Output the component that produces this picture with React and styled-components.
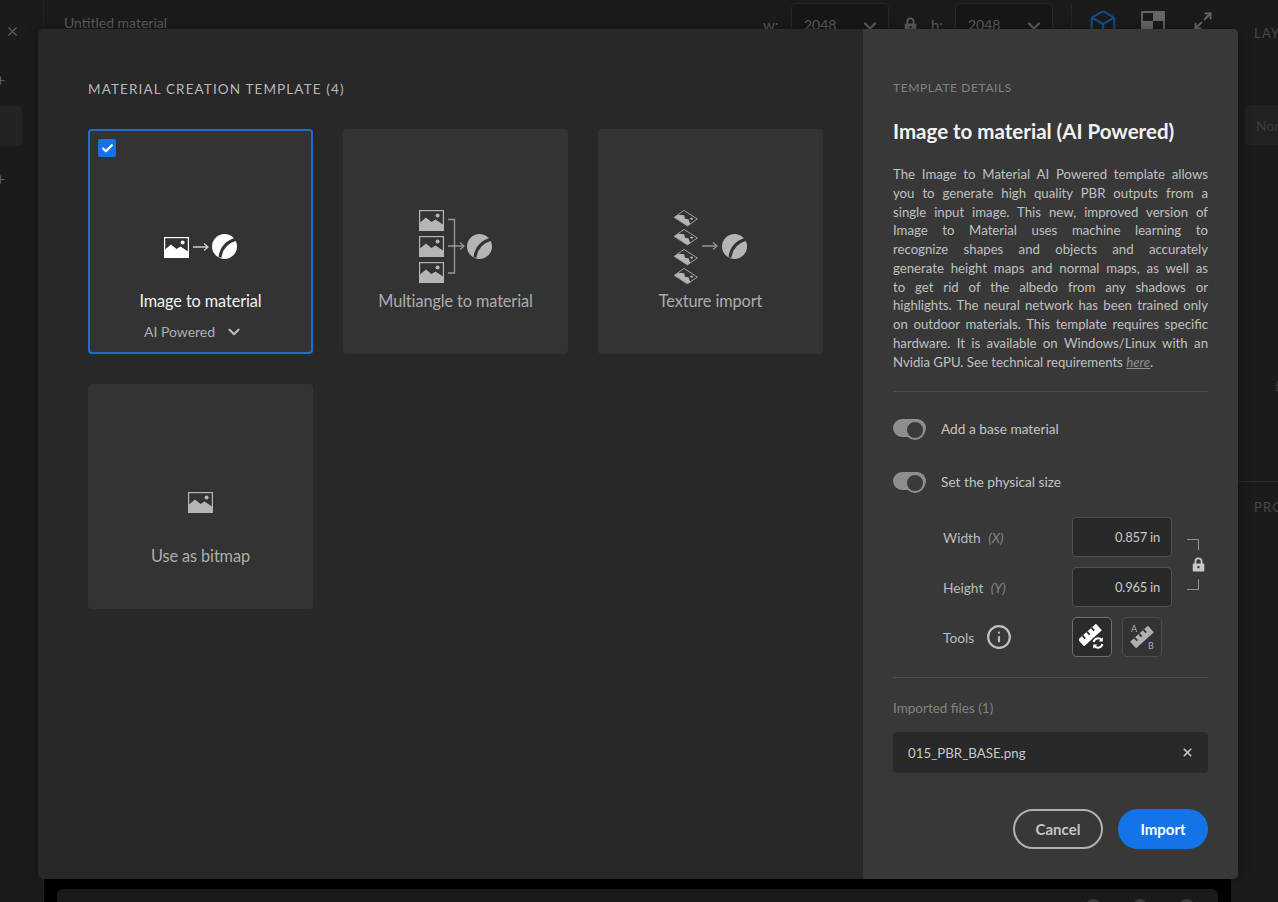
import styled, { createGlobalStyle } from 'styled-components';
import { X, Plus, ChevronDown, Check, Info, Box, Maximize2 } from 'lucide-react';

const GlobalStyle = createGlobalStyle`
  html, body {
    margin: 0;
    padding: 0;
    background: #1b1b1b;
    overflow: hidden;
  }
  * { box-sizing: border-box; }
  body {
    font-family: "Lato", "Noto Sans", sans-serif;
  }
`;

// Small drawings used on the template cards
const ImageGlyph = ({ x = 0, y = 0 }) => (
  <g transform={`translate(${x} ${y})`}>
    <rect x="0.6" y="0.6" width="23.8" height="19.8" fill="none" stroke="currentColor" strokeWidth="1.2" />
    <path d="M1 20V12.5L7 7.5L12.5 12L16.5 9.5L24 14.5V20Z" fill="currentColor" />
    <circle cx="18.6" cy="5.6" r="2" fill="currentColor" />
  </g>
);

const SphereGlyph = ({ x = 0, y = 0, bg }) => (
  <g transform={`translate(${x} ${y})`}>
    <circle cx="12.5" cy="12.5" r="12.5" fill="currentColor" />
    <path d="M8 23.5C9 15 14 8 24.5 5" fill="none" stroke={bg} strokeWidth="3" />
  </g>
);

const Arrow = ({ x, y, w = 15 }) => (
  <path
    d={`M${x} ${y}H${x + w}M${x + w - 4} ${y - 3.5}L${x + w} ${y}L${x + w - 4} ${y + 3.5}`}
    fill="none"
    stroke="currentColor"
    strokeWidth="1.3"
    opacity="0.75"
  />
);

const ImageToMaterialIcon = () => (
  <svg width="74" height="26" viewBox="0 0 74 26">
    <ImageGlyph x={0} y={3} />
    <Arrow x={29} y={13} />
    <SphereGlyph x={48} y={0} bg="#333" />
  </svg>
);

const MultiangleIcon = () => (
  <svg width="74" height="74" viewBox="0 0 74 74">
    <ImageGlyph x={0} y={0} />
    <ImageGlyph x={0} y={26} />
    <ImageGlyph x={0} y={52} />
    <path d="M29 9.5H35.5V63H29" fill="none" stroke="currentColor" strokeWidth="1.4" opacity="0.75" />
    <Arrow x={29} y={36} w={16} />
    <SphereGlyph x={48} y={24} bg="#333" />
  </svg>
);

const TiltedImage = ({ y }) => (
  <g transform={`matrix(0.56 0.36 -0.5 0.35 10 ${y})`}>
    <ImageGlyph />
  </g>
);

const TextureIcon = () => (
  <svg width="74" height="74" viewBox="0 0 74 74">
    <TiltedImage y={0} />
    <TiltedImage y={19} />
    <TiltedImage y={39} />
    <TiltedImage y={58} />
    <Arrow x={28} y={36} w={15} />
    <SphereGlyph x={48} y={24} bg="#333" />
  </svg>
);

const BitmapIcon = () => (
  <svg width="25" height="21" viewBox="0 0 25 21">
    <ImageGlyph />
  </svg>
);

const RulerBody = ({ x, y, bg }) => (
  <g transform={`translate(${x} ${y}) rotate(-42)`}>
    <rect x="-12" y="-4.5" width="24" height="9" rx="0.8" fill="currentColor" />
    <path d="M-6 -4.5V-0.5M0 -4.5V-0.5M6 -4.5V-0.5" stroke={bg} strokeWidth="1.8" />
  </g>
);

const RulerSyncIcon = () => (
  <svg width="26" height="26" viewBox="0 0 26 26">
    <RulerBody x={11} y={11} bg="#2b2b2b" />
    <circle cx="19" cy="19" r="7" fill="#2b2b2b" />
    <path
      d="M14.6 18A4.6 4.6 0 0 1 22.6 16M23.4 20A4.6 4.6 0 0 1 15.4 22"
      fill="none"
      stroke="currentColor"
      strokeWidth="2"
    />
    <path d="M23.8 13.2V17.4H19.6ZM14.2 24.8V20.6H18.4Z" fill="currentColor" />
  </svg>
);

const RulerLabelIcon = () => (
  <svg width="30" height="30" viewBox="0 0 30 30">
    <RulerBody x={15} y={15} bg="#333" />
    <Tag x="4" y="10">A</Tag>
    <Tag x="21" y="27">B</Tag>
  </svg>
);

const PadLock = ({ size, color }) => (
  <svg width={size} height={size * 1.15} viewBox="0 0 13 15">
    <path d="M3.4 7V4.4A3.1 3.1 0 0 1 9.6 4.4V7" fill="none" stroke={color} strokeWidth="1.8" />
    <path
      fillRule="evenodd"
      d="M1.5 6.5H11.5A.8 .8 0 0 1 12.3 7.3V13.7A.8 .8 0 0 1 11.5 14.5H1.5A.8 .8 0 0 1 .7 13.7V7.3A.8 .8 0 0 1 1.5 6.5ZM6.5 9A1.2 1.2 0 1 0 6.5 11.4A1.2 1.2 0 1 0 6.5 9Z"
      fill={color}
    />
  </svg>
);

const CheckerIcon = () => (
  <svg width="24" height="20" viewBox="0 0 24 20">
    <path d="M1 1H23V19H1Z" fill="none" stroke="#666" strokeWidth="1.8" />
    <path d="M12 1H23V10H12ZM1 10H12V19H1Z" fill="#666" />
  </svg>
);

const TEMPLATES = [
  { name: 'Image to material', Icon: ImageToMaterialIcon, selected: true, sub: 'AI Powered' },
  { name: 'Multiangle to material', Icon: MultiangleIcon },
  { name: 'Texture import', Icon: TextureIcon },
  { name: 'Use as bitmap', Icon: BitmapIcon },
];

// Wrapped by hand so every line breaks where it does in the app
const DESCRIPTION_LINES = [
  'The Image to Material AI Powered template allows',
  'you to generate high quality PBR outputs from a',
  'single input image. This new, improved version of',
  'Image to Material uses machine learning to',
  'recognize shapes and objects and accurately',
  'generate height maps and normal maps, as well as',
  'to get rid of the albedo from any shadows or',
  'highlights. The neural network has been trained only',
  'on outdoor materials. This template requires specific',
  'hardware. It is available on Windows/Linux with an',
];

export default function App() {
  return (
    <Shell>
      <GlobalStyle />
      <LeftRail>
        <RailClose><X size={15} /></RailClose>
        <RailPlus><Plus size={13} /></RailPlus>
        <RailBox />
        <RailPlus $second><Plus size={13} /></RailPlus>
      </LeftRail>

      <Main>
        <TopBar>
          <DocTitle>Untitled material</DocTitle>
          <SizeLabel>w:</SizeLabel>
          <SizeSelect>2048 <ChevronDown size={20} strokeWidth={2.8} /></SizeSelect>
          <BarLock><PadLock size={13} color="#5c5c5c" /></BarLock>
          <SizeLabel $narrow>h:</SizeLabel>
          <SizeSelect>2048 <ChevronDown size={20} strokeWidth={2.8} /></SizeSelect>
          <BarDivider />
          <ViewIcon $active><Box size={30} strokeWidth={1.7} /></ViewIcon>
          <ViewIcon><CheckerIcon /></ViewIcon>
          <ViewIcon><Maximize2 size={20} strokeWidth={2.4} /></ViewIcon>
        </TopBar>
        <Canvas />
        <BottomPanel>
          <BottomDot />
          <BottomDot />
          <BottomDot />
        </BottomPanel>
      </Main>

      <RightRail>
        <RailHeading>LAYERS</RailHeading>
        <RailField>None</RailField>
        <RailGlyph>L</RailGlyph>
        <RailDivider />
        <RailHeading>PROPERTIES</RailHeading>
      </RightRail>

      <Modal>
        <TemplatesPane>
          <PaneHeading>MATERIAL CREATION TEMPLATE (4)</PaneHeading>
          <CardGrid>
            {TEMPLATES.map(({ name, Icon, selected, sub }) => (
              <Card key={name} $selected={selected}>
                {selected && <CardCheck><Check size={13} strokeWidth={4} /></CardCheck>}
                <CardIcon><Icon /></CardIcon>
                <CardName $selected={selected}>{name}</CardName>
                {sub && (
                  <CardSub>
                    {sub}
                    <ChevronDown size={18} strokeWidth={3} />
                  </CardSub>
                )}
              </Card>
            ))}
          </CardGrid>
        </TemplatesPane>

        <DetailsPane>
          <DetailsLabel>TEMPLATE DETAILS</DetailsLabel>
          <DetailsTitle>Image to material (AI Powered)</DetailsTitle>
          <Description>
            {DESCRIPTION_LINES.map(line => (
              <DescriptionLine key={line}>{line}</DescriptionLine>
            ))}
            <DescriptionLine $last>
              Nvidia GPU. See technical requirements <HereLink>here</HereLink>.
            </DescriptionLine>
          </Description>
          <Rule />
          <ToggleRow>
            <Toggle />
            <span>Add a base material</span>
          </ToggleRow>
          <ToggleRow $second>
            <Toggle />
            <span>Set the physical size</span>
          </ToggleRow>

          <SizeGrid>
            <SizeName>Width <em>(X)</em></SizeName>
            <ValueBox>0.857 in</ValueBox>
            <LinkBracket>
              <BracketTop />
              <BracketLock><PadLock size={13} color="#c8c8c8" /></BracketLock>
              <BracketBottom />
            </LinkBracket>
            <SizeName>Height <em>(Y)</em></SizeName>
            <ValueBox>0.965 in</ValueBox>
            <SizeName>
              Tools
              <InfoMark><Info size={26} strokeWidth={2} /></InfoMark>
            </SizeName>
            <ToolRow>
              <ToolButton $active><RulerSyncIcon /></ToolButton>
              <ToolButton><RulerLabelIcon /></ToolButton>
            </ToolRow>
          </SizeGrid>
          <Rule $lower />

          <ImportedLabel>Imported files (1)</ImportedLabel>
          <FileChip>
            015_PBR_BASE.png
            <X size={13} strokeWidth={3} />
          </FileChip>

          <Actions>
            <CancelButton>Cancel</CancelButton>
            <ImportButton>Import</ImportButton>
          </Actions>
        </DetailsPane>
      </Modal>
    </Shell>
  );
}

// Page behind the dialog
const Shell = styled.div`
  position: relative;
  display: flex;
  width: 1278px;
  height: 902px;
  overflow: hidden;
  background: #1b1b1b;
`;

const LeftRail = styled.aside`
  width: 44px;
  flex: none;
  display: flex;
  flex-direction: column;
  align-items: flex-start;
  background: #1b1b1b;
  border-right: 1px solid #222;
`;

const RailClose = styled.div`
  display: flex;
  color: #5a5a5a;
  padding: 24px 0 0 5px;
`;

const RailPlus = styled.div`
  display: flex;
  color: #5a5a5a;
  margin: ${p => (p.$second ? '27px' : '35px')} 0 0 -6px;
`;

const RailBox = styled.div`
  width: 22px;
  height: 40px;
  margin-top: 19px;
  background: #232323;
  border-radius: 0 3px 3px 0;
`;

const Main = styled.main`
  width: 1187px;
  flex: none;
  display: flex;
  flex-direction: column;
  background: #000;
`;

const TopBar = styled.header`
  height: 48px;
  flex: none;
  display: flex;
  align-items: flex-start;
  padding: 3px 0 0 20px;
  background: #1b1b1b;
  color: #5c5c5c;
  font-size: 14px;
`;

const DocTitle = styled.div`
  width: 699px;
  padding-top: 11px;
`;

const SizeLabel = styled.div`
  width: ${p => (p.$narrow ? '24px' : '28px')};
  padding-top: 13px;
  font-size: 15px;
  color: #5c5c5c;
`;

const SizeSelect = styled.div`
  width: 98px;
  height: 42px;
  display: flex;
  justify-content: space-between;
  padding: 12px 8px 0 12px;
  background: #171717;
  border: 1px solid #272727;
  border-radius: 5px;
  color: #5c5c5c;
  font-size: 14px;
`;

const BarLock = styled.div`
  width: 42px;
  padding: 14px 0 0 15px;
`;

const BarDivider = styled.div`
  width: 1px;
  height: 44px;
  margin: 0 6px 0 18px;
  background: #262626;
`;

const ViewIcon = styled.div`
  width: 50px;
  height: 40px;
  display: flex;
  justify-content: center;
  padding-top: ${p => (p.$active ? '6px' : '8px')};
  color: ${p => (p.$active ? '#134a8c' : '#666')};
`;

const Canvas = styled.div`
  flex: 1;
`;

const BottomPanel = styled.div`
  height: 13px;
  flex: none;
  display: flex;
  justify-content: flex-end;
  gap: 33px;
  margin: 0 13px 0 13px;
  padding: 10px 24px 0 0;
  background: #1a1a1a;
  border-radius: 6px 6px 0 0;
`;

const BottomDot = styled.div`
  width: 14px;
  height: 14px;
  border-radius: 50%;
  background: #3a3a3a;
`;

const RightRail = styled.aside`
  flex: 1;
  display: flex;
  flex-direction: column;
  background: #1b1b1b;
  padding: 25px 0 0 23px;
`;

const RailHeading = styled.div`
  color: #484848;
  font-size: 13px;
  letter-spacing: 1.2px;
  white-space: nowrap;
`;

const RailField = styled.div`
  width: 60px;
  height: 40px;
  margin: 64px 0 0 -9px;
  padding: 12px 0 0 11px;
  background: #212121;
  border-radius: 4px;
  color: #3c3c3c;
  font-size: 14px;
  white-space: nowrap;
`;

const RailGlyph = styled.div`
  height: 17px;
  margin: 232px 0 0 21px;
  font-size: 14px;
  line-height: 17px;
  font-style: italic;
  color: #3a3a3a;
`;

const RailDivider = styled.div`
  height: 1px;
  margin: 87px 0 17px -23px;
  background: #2a2a2a;
`;

// Dialog
const Modal = styled.section`
  position: absolute;
  left: 38px;
  top: 29px;
  width: 1200px;
  height: 850px;
  display: flex;
  overflow: hidden;
  border-radius: 5px;
  box-shadow: 0 0 12px rgba(0, 0, 0, 0.35);
`;

const TemplatesPane = styled.div`
  width: 825px;
  flex: none;
  padding: 51px 0 0 50px;
  background: #282828;
`;

const PaneHeading = styled.h2`
  margin: 0 0 31px;
  font-size: 13.5px;
  line-height: 18px;
  font-weight: 400;
  letter-spacing: 1.12px;
  color: #b8b8b8;
`;

const CardGrid = styled.div`
  display: grid;
  grid-template-columns: repeat(3, 225px);
  grid-auto-rows: 225px;
  gap: 30px;
`;

const Card = styled.div`
  position: relative;
  display: flex;
  flex-direction: column;
  align-items: center;
  padding-top: 81px;
  background: #333;
  box-shadow: ${p => (p.$selected ? 'inset 0 0 0 2px #1b6fd0' : 'none')};
  border-radius: 4px;
  color: ${p => (p.$selected ? '#fff' : '#b5b5b5')};
`;

const CardCheck = styled.div`
  position: absolute;
  left: 10px;
  top: 10px;
  width: 18px;
  height: 18px;
  display: flex;
  align-items: center;
  justify-content: center;
  background: #1473e6;
  border-radius: 2px;
  color: #fff;
`;

const CardIcon = styled.div`
  display: flex;
  align-items: center;
  height: 74px;
  margin-bottom: 6px;
  line-height: 0;
`;

const CardName = styled.div`
  font-size: 16.3px;
  line-height: 22px;
  letter-spacing: -0.1px;
  color: ${p => (p.$selected ? '#f2f2f2' : '#adadad')};
`;

const CardSub = styled.div`
  display: flex;
  align-items: center;
  gap: 10px;
  margin: 11px 0 0 -14px;
  font-size: 14px;
  line-height: 18px;
  color: #b0b0b0;
  svg { color: #b8b8b8; }
`;

const DetailsPane = styled.div`
  flex: 1;
  display: flex;
  flex-direction: column;
  padding: 51px 30px 0 30px;
  background: #383838;
  color: #c4c4c4;
`;

const DetailsLabel = styled.div`
  font-size: 12px;
  line-height: 16px;
  letter-spacing: 0.6px;
  color: #828282;
`;

const DetailsTitle = styled.h1`
  margin: 21px 0 0;
  font-size: 20.5px;
  line-height: 28px;
  font-weight: 700;
  color: #f2f2f2;
  white-space: nowrap;
`;

const Description = styled.div`
  margin: 20px 0 0;
  font-size: 13.2px;
  line-height: 18.75px;
  color: #c0c0c0;
`;

const DescriptionLine = styled.div`
  white-space: ${p => (p.$last ? 'nowrap' : 'normal')};
  text-align: justify;
  text-align-last: ${p => (p.$last ? 'left' : 'justify')};
`;

const HereLink = styled.span`
  color: #8f8f8f;
  font-style: italic;
  text-decoration: underline;
`;

const Rule = styled.div`
  flex: none;
  height: 1px;
  margin-top: 20px;
  background: #4e4e4e;
`;

const ToggleRow = styled.div`
  display: flex;
  align-items: center;
  gap: 15px;
  height: 20px;
  margin-top: ${p => (p.$second ? '33px' : '26px')};
  font-size: 13.7px;
  color: #c4c4c4;
`;

const Toggle = styled.div`
  position: relative;
  width: 33px;
  height: 18px;
  flex: none;
  background: #8e8e8e;
  border-radius: 9px;
  &::after {
    content: '';
    position: absolute;
    right: 1px;
    top: 1px;
    width: 16px;
    height: 16px;
    border-radius: 50%;
    border: 2px solid #8e8e8e;
    background: #3a3a3a;
  }
`;

const SizeGrid = styled.div`
  display: grid;
  grid-template-columns: 129px 100px 1fr;
  grid-auto-rows: 40px;
  row-gap: 10px;
  margin-top: 26px;
  padding-left: 50px;
  align-items: center;
  font-size: 13.7px;
`;

const SizeName = styled.div`
  display: flex;
  align-items: center;
  color: #bcbcbc;
  white-space: pre;
  em { color: #858585; margin-left: 4px; }
`;

const ValueBox = styled.div`
  height: 40px;
  padding: 0 11px;
  display: flex;
  align-items: center;
  justify-content: flex-end;
  background: #292929;
  border: 1px solid #505050;
  border-radius: 4px;
  color: #c8c8c8;
  font-size: 13px;
  letter-spacing: -0.25px;
`;

const LinkBracket = styled.div`
  grid-row: 1 / span 2;
  grid-column: 3;
  display: flex;
  flex-direction: column;
  align-items: flex-start;
  justify-content: center;
  width: 18px;
  height: 52px;
  margin: 5px 0 0 15px;
  gap: 7px;
`;

const BracketLock = styled.div`
  display: flex;
  margin-left: 5px;
`;

const BracketTop = styled.div`
  width: 12px;
  height: 11px;
  border-top: 1px solid #949494;
  border-right: 1px solid #949494;
`;

const BracketBottom = styled.div`
  width: 12px;
  height: 11px;
  border-bottom: 1px solid #949494;
  border-right: 1px solid #949494;
`;

const InfoMark = styled.span`
  display: flex;
  margin-left: 12px;
  color: #c0c0c0;
`;

const ToolRow = styled.div`
  display: flex;
  gap: 10px;
  grid-column: 2 / span 2;
`;

const ToolButton = styled.div`
  width: 40px;
  height: 40px;
  display: flex;
  align-items: center;
  justify-content: center;
  background: ${p => (p.$active ? '#2b2b2b' : '#333')};
  border: 1px solid ${p => (p.$active ? '#6e6e6e' : '#4c4c4c')};
  border-radius: 5px;
  color: ${p => (p.$active ? '#fff' : '#b0b0b0')};
`;

const Tag = styled.text`
  font-size: 9px;
  fill: currentColor;
`;

const ImportedLabel = styled.div`
  margin-top: 20px;
  font-size: 13.5px;
  line-height: 20px;
  color: #828282;
`;

const FileChip = styled.div`
  height: 41px;
  margin-top: 14px;
  flex: none;
  display: flex;
  align-items: center;
  justify-content: space-between;
  padding: 0 14px 0 15px;
  background: #292929;
  border-radius: 4px;
  font-size: 13.3px;
  color: #c8c8c8;
`;

const Actions = styled.div`
  display: flex;
  justify-content: flex-end;
  gap: 15px;
  margin-top: 36px;
`;

const CancelButton = styled.div`
  width: 90px;
  height: 40px;
  display: flex;
  align-items: center;
  justify-content: center;
  border: 2px solid #b0b0b0;
  border-radius: 20px;
  font-size: 15px;
  font-weight: 700;
  color: #c4c4c4;
`;

const ImportButton = styled.div`
  width: 90px;
  height: 40px;
  display: flex;
  align-items: center;
  justify-content: center;
  background: #1473e6;
  border-radius: 20px;
  font-size: 15px;
  font-weight: 700;
  color: #fff;
`;
